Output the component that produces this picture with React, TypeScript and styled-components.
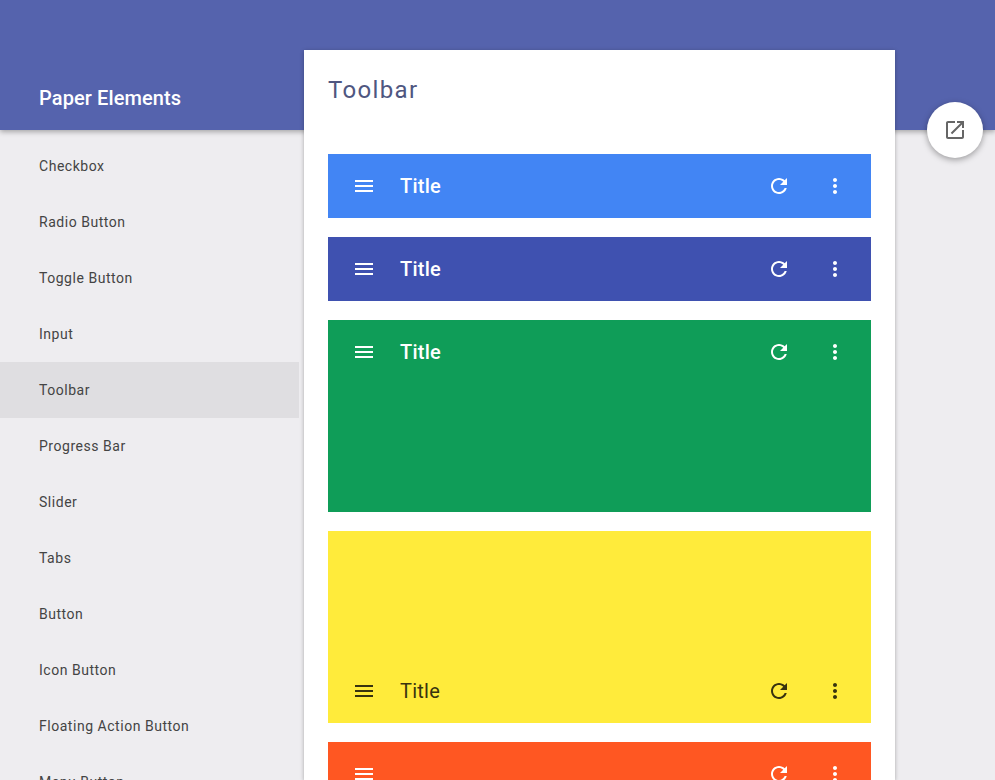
import styled, { createGlobalStyle } from "styled-components";

const GlobalStyle = createGlobalStyle`
  html, body {
    margin: 0;
    padding: 0;
    background: #eeedf0;
    font-family: Roboto, "Liberation Sans", sans-serif;
  }
`;

const Page = styled.div`
  position: relative;
  width: 995px;
  height: 780px;
  overflow: hidden;
`;

const Header = styled.header`
  position: relative;
  z-index: 1;
  box-sizing: border-box;
  height: 130px;
  padding: 85px 0 0 39px;
  background: #5563ad;
  box-shadow: 0 2px 5px rgb(0 0 0 / 30%);
`;

const Brand = styled.h1`
  margin: 0;
  font-size: 20px;
  line-height: 26px;
  font-weight: 500;
  letter-spacing: 0.1px;
  color: #fff;
`;

const Body = styled.div`
  display: flex;
  align-items: flex-start;
  margin-top: -80px;
`;

const Sidebar = styled.nav`
  width: 299px;
  margin-right: 5px;
  padding-top: 88px;
`;

const NavItem = styled.div<{ $active?: boolean }>`
  height: 56px;
  padding-left: 39px;
  font-size: 14px;
  line-height: 56px;
  letter-spacing: 0.53px;
  color: #444;
  background: ${(p) => (p.$active ? "#dfdee1" : "transparent")};
`;

const Card = styled.main`
  position: relative;
  z-index: 2;
  box-sizing: border-box;
  width: 591px;
  height: 730px;
  padding: 24px;
  background: #fff;
  box-shadow: 0 1px 4px rgb(0 0 0 / 30%);
`;

const CardTitle = styled.h2`
  margin: 0 0 48px;
  font-size: 24px;
  line-height: 32px;
  font-weight: 400;
  letter-spacing: 1.35px;
  color: #4f5680;
`;

const Toolbar = styled.div<{ $bg: string; $fg: string; $tall?: boolean; $bottom?: boolean }>`
  display: flex;
  flex-direction: column;
  justify-content: ${(p) => (p.$bottom ? "flex-end" : "flex-start")};
  height: ${(p) => (p.$tall ? "192px" : "64px")};
  margin-bottom: 19px;
  background: ${(p) => p.$bg};
  color: ${(p) => p.$fg};
`;

const ToolbarRow = styled.div`
  display: flex;
  align-items: center;
  flex: none;
  height: 64px;
  padding: 0 16px;
`;

const ToolbarTitle = styled.span<{ $weight: number }>`
  flex: 1;
  margin-left: 16px;
  font-size: 20px;
  font-weight: ${(p) => p.$weight};
  letter-spacing: 0.25px;
`;

const IconButton = styled.span`
  display: flex;
  flex: none;
  align-items: center;
  justify-content: center;
  width: 40px;
  height: 40px;

  & + & {
    margin-left: 16px;
  }
`;

const Fab = styled.div`
  position: absolute;
  z-index: 3;
  left: 927px;
  top: 102px;
  display: flex;
  align-items: center;
  justify-content: center;
  width: 56px;
  height: 56px;
  border-radius: 50%;
  background: #fff;
  color: #666;
  box-shadow: 0 2px 6px rgb(0 0 0 / 35%);
`;

const paths = {
  menu: "M3 18h18v-2H3v2zm0-5h18v-2H3v2zm0-7v2h18V6H3z",
  refresh:
    "M17.65 6.35C16.2 4.9 14.21 4 12 4c-4.42 0-7.99 3.58-7.99 8s3.57 8 7.99 8c3.73 0 6.84-2.55 7.73-6h-2.08c-.82 2.33-3.04 4-5.65 4-3.31 0-6-2.69-6-6s2.69-6 6-6c1.66 0 3.14.69 4.22 1.78L13 11h7V4l-2.35 2.35z",
  more: "M12 8c1.1 0 2-.9 2-2s-.9-2-2-2-2 .9-2 2 .9 2 2 2zm0 2c-1.1 0-2 .9-2 2s.9 2 2 2 2-.9 2-2-.9-2-2-2zm0 6c-1.1 0-2 .9-2 2s.9 2 2 2 2-.9 2-2-.9-2-2-2z",
  open: "M19 19H5V5h7V3H5c-1.11 0-2 .9-2 2v14c0 1.1.89 2 2 2h14c1.1 0 2-.9 2-2v-7h-2v7zM14 3v2h3.59l-9.83 9.83 1.41 1.41L19 6.41V10h2V3h-7z",
};

const Icon = ({ name }: { name: keyof typeof paths }) => (
  <svg width="24" height="24" viewBox="0 0 24 24" fill="currentColor">
    <path d={paths[name]} />
  </svg>
);

const navItems = [
  "Checkbox",
  "Radio Button",
  "Toggle Button",
  "Input",
  "Toolbar",
  "Progress Bar",
  "Slider",
  "Tabs",
  "Button",
  "Icon Button",
  "Floating Action Button",
  "Menu Button",
];

const toolbars = [
  { bg: "#4285f4", fg: "#fff", title: "Title", weight: 500 },
  { bg: "#3f51b0", fg: "#fff", title: "Title", weight: 500 },
  { bg: "#0f9d58", fg: "#fff", title: "Title", weight: 500, tall: true },
  { bg: "#ffeb3b", fg: "#38330f", title: "Title", weight: 400, tall: true, bottom: true },
  { bg: "#ff5722", fg: "#fff", title: "", weight: 500 },
];

const App = () => {
  return (
    <Page>
      <GlobalStyle />
      <Header>
        <Brand>Paper Elements</Brand>
      </Header>
      <Body>
        <Sidebar>
          {navItems.map((item) => (
            <NavItem key={item} $active={item === "Toolbar"}>
              {item}
            </NavItem>
          ))}
        </Sidebar>
        <Card>
          <CardTitle>Toolbar</CardTitle>
          {toolbars.map((t) => (
            <Toolbar key={t.bg} $bg={t.bg} $fg={t.fg} $tall={t.tall} $bottom={t.bottom}>
              <ToolbarRow>
                <IconButton><Icon name="menu" /></IconButton>
                <ToolbarTitle $weight={t.weight}>{t.title}</ToolbarTitle>
                <IconButton><Icon name="refresh" /></IconButton>
                <IconButton><Icon name="more" /></IconButton>
              </ToolbarRow>
            </Toolbar>
          ))}
        </Card>
      </Body>
      <Fab><Icon name="open" /></Fab>
    </Page>
  );
};

export default App;
